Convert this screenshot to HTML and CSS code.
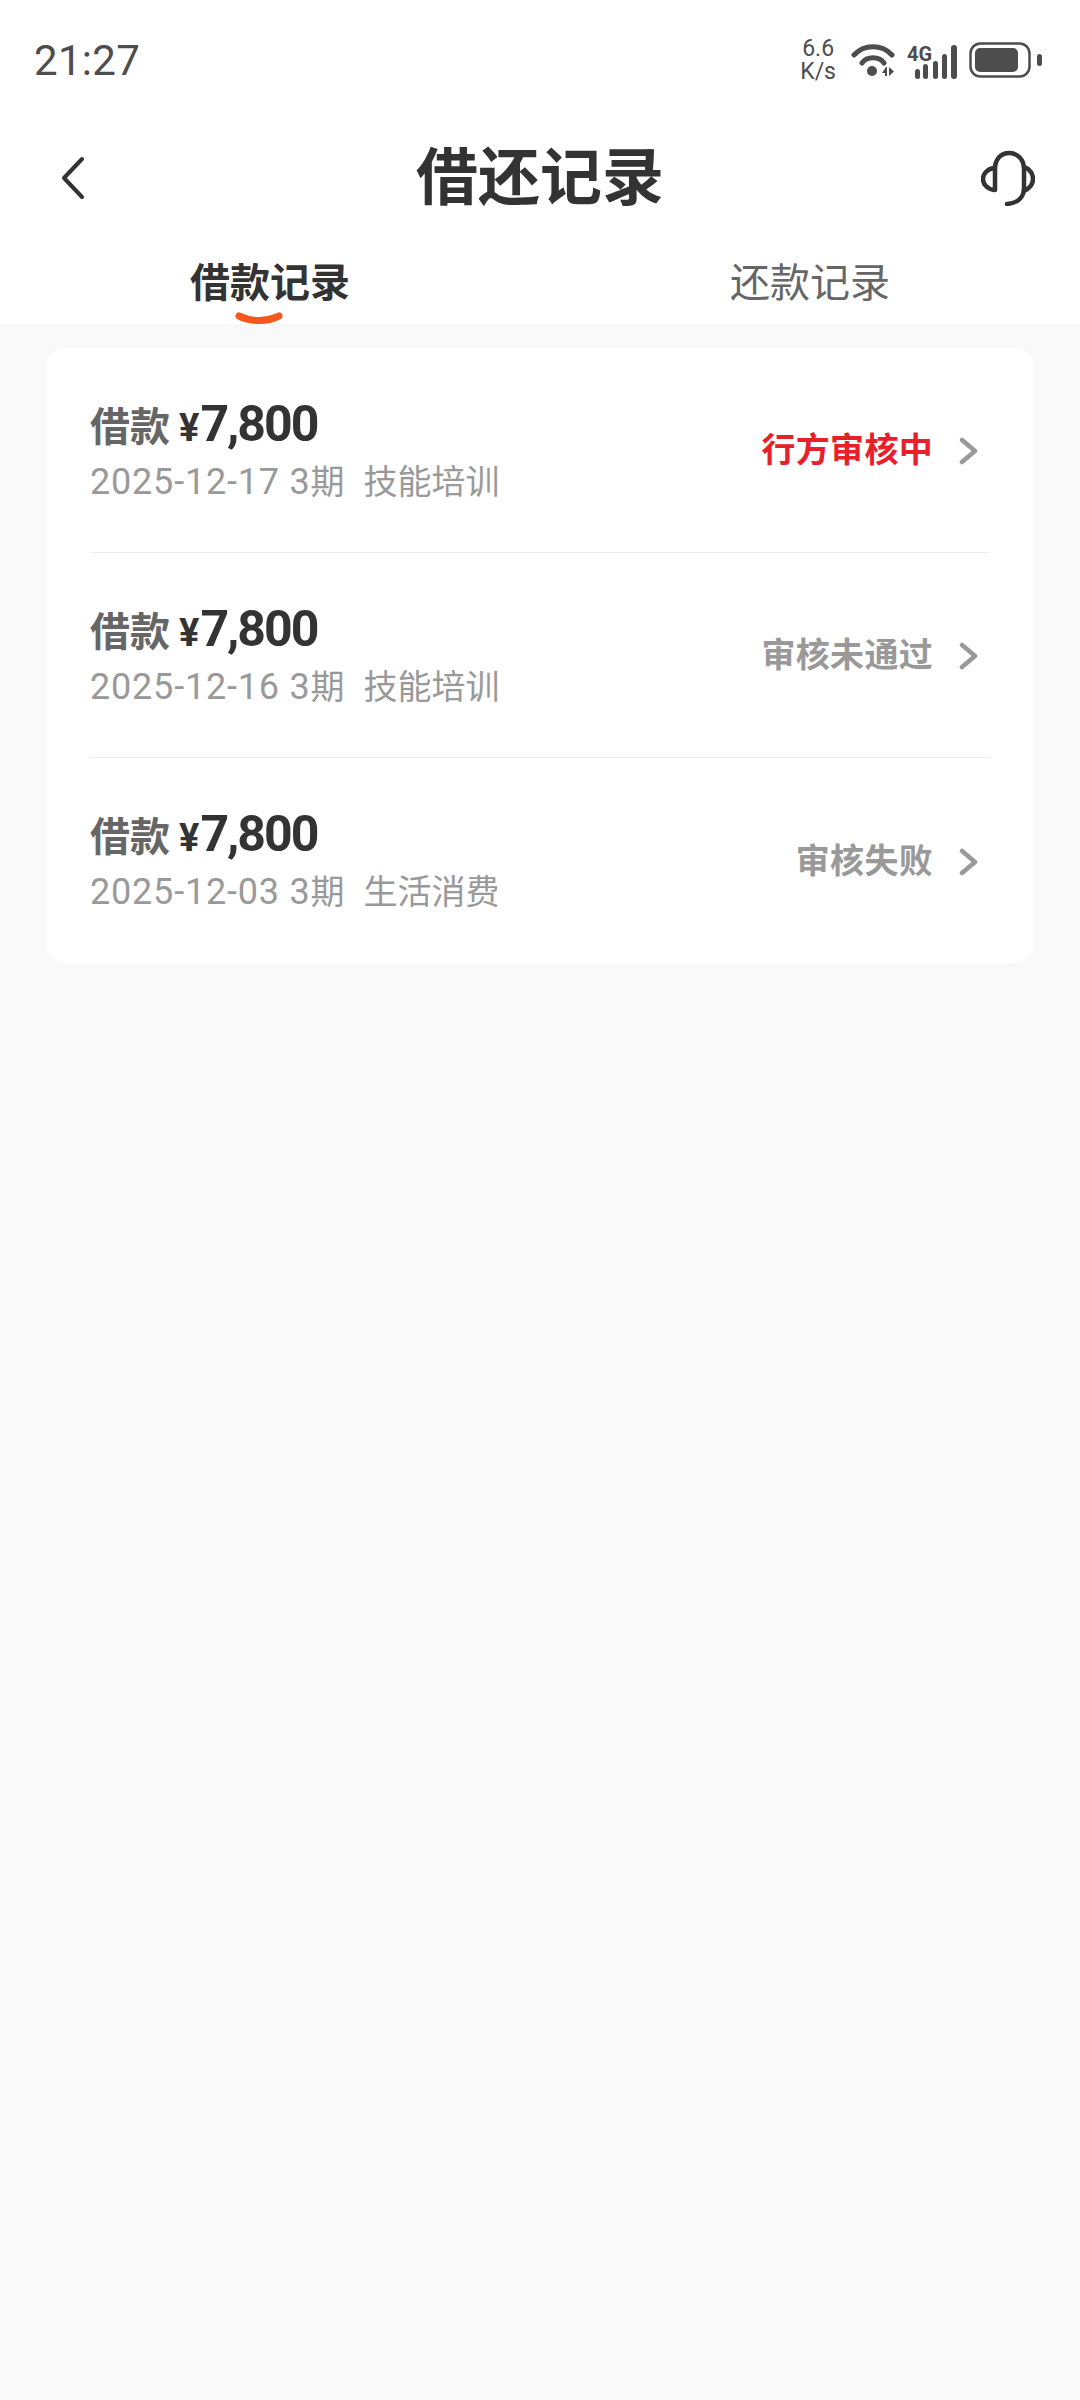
FILE: index.html
```html
<!DOCTYPE html>
<html lang="zh-CN">
<head>
    <meta charset="UTF-8">
    <meta name="viewport" content="width=device-width, initial-scale=1.0">
    <title>借还记录</title>
    <link rel="stylesheet" href="styles.css">
</head>
<body>
    <div class="top">
        <div class="status-bar">
            <div class="time">21:27</div>
            <div class="status-icons">
                <div class="speed"><div>6.6</div><div>K/s</div></div>
                <svg width="44" height="34" viewBox="0 0 44 34">
                    <path d="M3 12C13 1 31 1 41 12" fill="none" stroke="#4d4d4d" stroke-width="5" stroke-linecap="round"/>
                    <path d="M11 20C16 13 28 13 33 20" fill="none" stroke="#4d4d4d" stroke-width="5" stroke-linecap="round"/>
                    <circle cx="21" cy="28" r="5" fill="#4d4d4d"/>
                    <path d="M35 24l-4 6h3v3h2v-9zM38 24v9l5-4.500z" fill="#4d4d4d"/>
                </svg>
                <svg width="50" height="38" viewBox="0 -4 50 38">
                    <text x="0" y="16" class="net">4G</text>
                    <rect x="8" y="24" width="5" height="10" rx="2.500" fill="#4d4d4d"/>
                    <rect x="16" y="19" width="5" height="15" rx="2.500" fill="#4d4d4d"/>
                    <rect x="26" y="16" width="5" height="18" rx="2.500" fill="#4d4d4d"/>
                    <rect x="35" y="9" width="5" height="25" rx="2.500" fill="#4d4d4d"/>
                    <rect x="44" y="0" width="6" height="34" rx="3" fill="#4d4d4d"/>
                </svg>
                <svg width="73" height="36" viewBox="0 0 73 36">
                    <rect x="1.500" y="1.500" width="59" height="33" rx="10" fill="none" stroke="#4d4d4d" stroke-width="2.500"/>
                    <rect x="6" y="6" width="43" height="24" rx="5" fill="#4d4d4d"/>
                    <rect x="68" y="12" width="5" height="12" rx="2.500" fill="#4d4d4d"/>
                </svg>
            </div>
        </div>
        <div class="nav">
            <svg class="back" width="26" height="44" viewBox="0 0 26 44">
                <path d="M22 3L4 22L22 41" fill="none" stroke="#333" stroke-width="4" stroke-linecap="round" stroke-linejoin="round"/>
            </svg>
            <h1>借还记录</h1>
            <svg class="service" width="54" height="56" viewBox="0 0 54 56">
                <path d="M14 40V19C14 9 20 3 28 3S43 9 43 19V38C43 47 37 53 26 54" fill="none" stroke="#333" stroke-width="4.500" stroke-linecap="round"/>
                <path d="M13 18C6 19 2 24 2 29S6 39 13 40" fill="none" stroke="#333" stroke-width="4.500" stroke-linecap="round"/>
                <path d="M43 17C49 19 52 24 52 29S49 38 43 41" fill="none" stroke="#333" stroke-width="4.500" stroke-linecap="round"/>
            </svg>
        </div>
        <div class="tabs">
            <div class="tab active">借款记录
                <svg class="tab-line" width="48" height="14" viewBox="0 0 48 14">
                    <path d="M4 4C16 10 32 10 44 4" fill="none" stroke="#f4581c" stroke-width="7" stroke-linecap="round"/>
                </svg>
            </div>
            <div class="tab">还款记录</div>
        </div>
    </div>

    <div class="card">
        <div class="row">
            <div class="info">
                <div class="amount"><span class="label">借款</span><span class="yen">¥</span><span class="num">7,800</span></div>
                <div class="meta">2025-12-17 3<span class="cn">期</span><span class="cn use">技能培训</span></div>
            </div>
            <div class="state red">行方审核中</div>
            <svg class="arrow" width="20" height="28" viewBox="0 0 20 28"><path d="M3 3L16 14L3 25" fill="none" stroke="#999" stroke-width="4.500" stroke-linecap="round" stroke-linejoin="round"/></svg>
        </div>
        <div class="row">
            <div class="info">
                <div class="amount"><span class="label">借款</span><span class="yen">¥</span><span class="num">7,800</span></div>
                <div class="meta">2025-12-16 3<span class="cn">期</span><span class="cn use">技能培训</span></div>
            </div>
            <div class="state">审核未通过</div>
            <svg class="arrow" width="20" height="28" viewBox="0 0 20 28"><path d="M3 3L16 14L3 25" fill="none" stroke="#999" stroke-width="4.500" stroke-linecap="round" stroke-linejoin="round"/></svg>
        </div>
        <div class="row">
            <div class="info">
                <div class="amount"><span class="label">借款</span><span class="yen">¥</span><span class="num">7,800</span></div>
                <div class="meta">2025-12-03 3<span class="cn">期</span><span class="cn use">生活消费</span></div>
            </div>
            <div class="state">审核失败</div>
            <svg class="arrow" width="20" height="28" viewBox="0 0 20 28"><path d="M3 3L16 14L3 25" fill="none" stroke="#999" stroke-width="4.500" stroke-linecap="round" stroke-linejoin="round"/></svg>
        </div>
    </div>
</body>
</html>
```

FILE: styles.css
```css
body {
    font-family: Roboto, "Noto Sans CJK SC", sans-serif;
    margin: 0;
    min-height: 2400px;
    background-color: #f9f9f9;
}
.top {
    background-color: #fff;
    height: 324px;
}
.status-bar {
    height: 120px;
    padding: 0 38px 0 34px;
    display: flex;
    justify-content: space-between;
    align-items: center;
    box-sizing: border-box;
}
.time {
    font-size: 42px;
    color: #4d4d4d;
    letter-spacing: 0.3px;
}
.status-icons {
    display: flex;
    align-items: center;
    gap: 12px;
}
.speed {
    font-size: 23px;
    line-height: 23px;
    color: #4d4d4d;
    text-align: center;
    margin-right: 3px;
}
.net {
    font-family: Roboto, sans-serif;
    font-size: 20px;
    font-weight: 700;
    fill: #4d4d4d;
}
.nav {
    height: 116px;
    padding: 0 45px;
    display: grid;
    grid-template-columns: 1fr auto 1fr;
    align-items: center;
}
.nav h1 {
    margin: 2px 0 0;
    font-size: 62px;
    line-height: 1;
    font-weight: 700;
    color: #333;
}
.back {
    margin-left: 15px;
}
.service {
    justify-self: end;
}
.tabs {
    display: grid;
    grid-template-columns: 1fr 1fr;
    height: 88px;
}
.tab {
    position: relative;
    text-align: center;
    font-size: 40px;
    line-height: 56px;
    color: #666;
    margin-top: 20px;
}
.tab.active {
    color: #333;
    font-weight: 700;
}
.tab-line {
    position: absolute;
    left: 235px;
    top: 56px;
}
.card {
    margin: 24px 46px 0;
    padding: 0 44px;
    background-color: #fff;
    border-radius: 20px;
}
.row {
    height: 205px;
    display: flex;
    align-items: center;
    border-bottom: 1px solid #eee;
    box-sizing: border-box;
}
.row:last-child {
    border-bottom: none;
}
.info {
    flex: 1;
}
.amount {
    display: flex;
    align-items: baseline;
    line-height: 56px;
    color: #333;
    font-weight: 700;
}
.label {
    font-size: 40px;
    color: #666;
    margin-right: 9px;
}
.yen {
    font-size: 38px;
    margin-right: 1px;
}
.num {
    font-size: 50px;
    letter-spacing: -2px;
}
.meta {
    font-size: 36px;
    line-height: 46px;
    letter-spacing: 0.8px;
    color: #999;
    margin-top: 3px;
}
.cn {
    font-size: 34px;
    letter-spacing: 0;
}
.cn.use {
    margin-left: 19px;
}
.state {
    font-size: 34px;
    font-weight: 700;
    letter-spacing: 0.3px;
    color: #999;
    margin-bottom: 5px;
}
.state.red {
    color: #e8202a;
}
.arrow {
    margin: 2px 11px 0 26px;
}
```
